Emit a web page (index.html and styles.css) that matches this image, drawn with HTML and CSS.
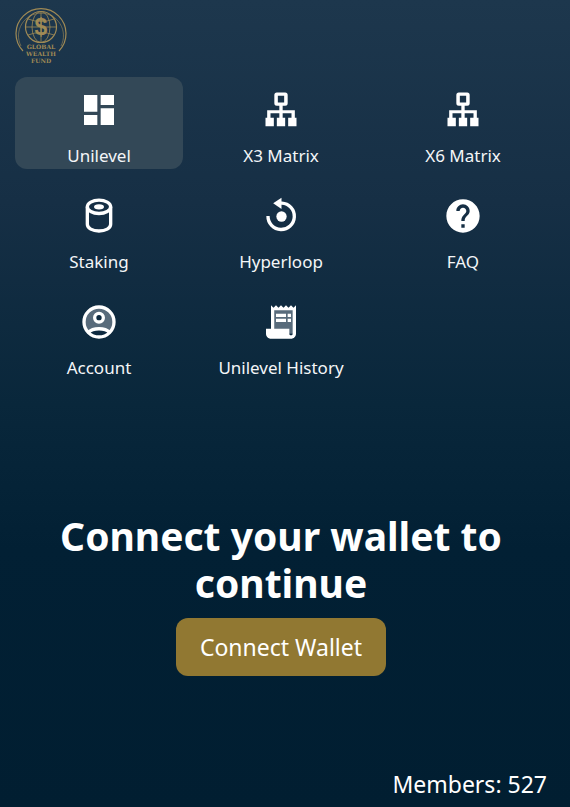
FILE: index.html
```html
<!DOCTYPE html>
<html lang="en">
    <head>
        <meta charset="utf-8">
        <meta name="viewport" content="width=device-width, initial-scale=1">
        <title>Global Wealth Fund</title>
        <link rel="stylesheet" href="styles.css">
    </head>
    <body>
        <header>
            <a class="logo" href="#" aria-label="Global Wealth Fund">
                <svg viewBox="0 0 52 56" fill="none" stroke="#a08a55">
                    <path d="M8 43A25 25 0 1 1 44 43" stroke-width="1.2"/>
                    <path d="M6 38A22.500 22.500 0 1 1 46 38" stroke-width=".6"/>
                    <circle cx="26" cy="19" r="15.5" stroke-width="1.2"/>
                    <ellipse cx="26" cy="19" rx="9" ry="15.5" stroke-width=".8"/>
                    <path d="M26 4v30M11 19h30M13 11q13 5 26 0M13 27q13-5 26 0" stroke-width=".8"/>
                    <text class="dollar" x="26" y="27">$</text>
                    <text x="26" y="41">GLOBAL</text>
                    <text x="26" y="48">WEALTH</text>
                    <text x="26" y="55">FUND</text>
                </svg>
            </a>
        </header>
        <nav class="menu">
            <a class="item active" href="#unilevel">
                <svg viewBox="0 0 24 24"><path d="M3 13h8V3H3v10zm0 8h8v-6H3v6zm10 0h8V11h-8v10zm0-18v6h8V3h-8z"/></svg>
                <span>Unilevel</span>
            </a>
            <a class="item" href="#x3">
                <svg viewBox="0 0 24 24"><path fill-rule="evenodd" d="M9.500 1.500h5a1.500 1.500 0 0 1 1.500 1.500v5a1.500 1.500 0 0 1-1.500 1.500h-1.500v2.700h7.300v4.500h1v5.100h-5V16.700h2v-2.700h-5.300v2.700h1.500v5.100H9.500v-5.100H11v-2.700H5.700v2.700h2v5.100h-5v-5.100h1v-4.500H11V9.500H9.500A1.500 1.500 0 0 1 8 8V3a1.500 1.500 0 0 1 1.500-1.500zm.6 2v4h3.800v-4z"/></svg>
                <span>X3 Matrix</span>
            </a>
            <a class="item" href="#x6">
                <svg viewBox="0 0 24 24"><path fill-rule="evenodd" d="M9.500 1.500h5a1.500 1.500 0 0 1 1.500 1.500v5a1.500 1.500 0 0 1-1.500 1.500h-1.500v2.700h7.300v4.500h1v5.100h-5V16.700h2v-2.700h-5.300v2.700h1.500v5.100H9.500v-5.100H11v-2.700H5.700v2.700h2v5.100h-5v-5.100h1v-4.500H11V9.500H9.500A1.500 1.500 0 0 1 8 8V3a1.500 1.500 0 0 1 1.500-1.500zm.6 2v4h3.800v-4z"/></svg>
                <span>X6 Matrix</span>
            </a>
            <a class="item" href="#staking">
                <svg viewBox="0 0 24 24">
                    <g class="line"><ellipse cx="12" cy="6.500" rx="7" ry="4"/><path d="M5 6.500v10.500c0 2.300 3.100 4 7 4s7-1.700 7-4V6.500"/></g>
                    <ellipse cx="12" cy="6.500" rx="3" ry="1.600"/>
                </svg>
                <span>Staking</span>
            </a>
            <a class="item" href="#hyperloop">
                <svg viewBox="0 0 24 24">
                    <path class="line" d="M11 4.300h1.500A7.900 7.900 0 1 1 4.200 12"/>
                    <path d="M12.300 1v6.800L7.300 4.400z"/>
                    <circle cx="12.300" cy="12.300" r="3.100"/>
                </svg>
                <span>Hyperloop</span>
            </a>
            <a class="item" href="#faq">
                <svg viewBox="0 0 24 24"><path d="M12 2C6.480 2 2 6.480 2 12s4.480 10 10 10 10-4.480 10-10S17.520 2 12 2zm1 17h-2v-2h2v2zm2.070-7.750l-.9.920C13.450 12.900 13 13.500 13 15h-2v-.5c0-1.100.45-2.100 1.170-2.830l1.240-1.260c.37-.36.59-.86.59-1.410 0-1.100-.9-2-2-2s-2 .9-2 2H8c0-2.210 1.790-4 4-4s4 1.790 4 4c0 .88-.36 1.680-.93 2.250z"/></svg>
                <span>FAQ</span>
            </a>
            <a class="item" href="#account">
                <svg viewBox="0 0 24 24">
                    <circle class="tone" cx="12" cy="12" r="9"/>
                    <path class="base" d="M5.500 18.500C8.500 15.300 15.500 15.300 18.500 18.500 15 21.500 9 21.500 5.500 18.500z"/>
                    <g class="line"><circle cx="12" cy="12" r="9"/><circle class="base" cx="12" cy="9.400" r="2.600"/><path d="M5.500 18.300C8.500 15.300 15.500 15.300 18.500 18.300"/></g>
                </svg>
                <span>Account</span>
            </a>
            <a class="item" href="#history">
                <svg viewBox="0 0 24 24">
                    <path class="tone" d="M8 4h12v15H8z"/>
                    <path d="M19.500 3.500L18 2l-1.500 1.500L15 2l-1.500 1.500L12 2l-1.500 1.500L9 2 7.500 3.500 6 2v14H3v3c0 1.660 1.340 3 3 3h12c1.660 0 3-1.340 3-3V2l-1.500 1.500zM19 19c0 .55-.45 1-1 1s-1-.45-1-1v-3H8V5h11v14z"/>
                    <path d="M9 7h6v2H9zM16 7h2v2h-2zM9 10h6v2H9zM16 10h2v2h-2z"/>
                </svg>
                <span>Unilevel History</span>
            </a>
        </nav>
        <main>
            <h1>Connect your wallet to continue</h1>
            <button class="connect" type="button">Connect Wallet</button>
        </main>
        <footer>Members: 527</footer>
    </body>
</html>
```
FILE: styles.css
```css
*{
    box-sizing: border-box;
}
body{
    margin: 0;
    padding: 8px 23px 8px 15px;
    min-height: 100vh;
    display: flex;
    flex-direction: column;
    background: linear-gradient(#1d374d, #162f45 25%, #09273b 50%, #022034 68%, #011e31);
    color: #fff;
    font-family: "Noto Sans", sans-serif;
}
.logo{
    display: block;
    width: 52px;
    height: 56px;
}
.logo svg{
    display: block;
}
.logo text{
    fill: #a08a55;
    stroke: none;
    font: bold 6px "DejaVu Serif", serif;
    text-anchor: middle;
}
.logo .dollar{
    font: bold 23px "Liberation Sans", sans-serif;
}

.menu{
    display: grid;
    grid-template-columns: repeat(3, 1fr);
    gap: 14px;
    margin-top: 13px;
}
.item{
    display: flex;
    flex-direction: column;
    align-items: center;
    gap: 14px;
    padding: 13px 0 1px;
    border-radius: 12px;
    color: #f4f6f8;
    font-size: 17px;
    line-height: 24px;
    text-decoration: none;
}
.item.active{
    background: #334857;
}
.item svg{
    width: 40px;
    height: 40px;
    fill: #fff;
}
.item .line{
    fill: none;
    stroke: #fff;
    stroke-width: 2;
}
.item .tone{
    fill: #586b7b;
}
.item .base{
    fill: #0e2a40;
}

main{
    margin-top: 131px;
    text-align: center;
}
h1{
    margin: 0 0 12px;
    font-size: 39px;
    line-height: 47px;
}
.connect{
    padding: 14px 24px;
    border: 0;
    border-radius: 12px;
    background: #917832;
    color: #fff;
    font: 23px/30px "Noto Sans", sans-serif;
}
footer{
    margin-top: auto;
    text-align: right;
    font-size: 23px;
    line-height: 30px;
}
```
